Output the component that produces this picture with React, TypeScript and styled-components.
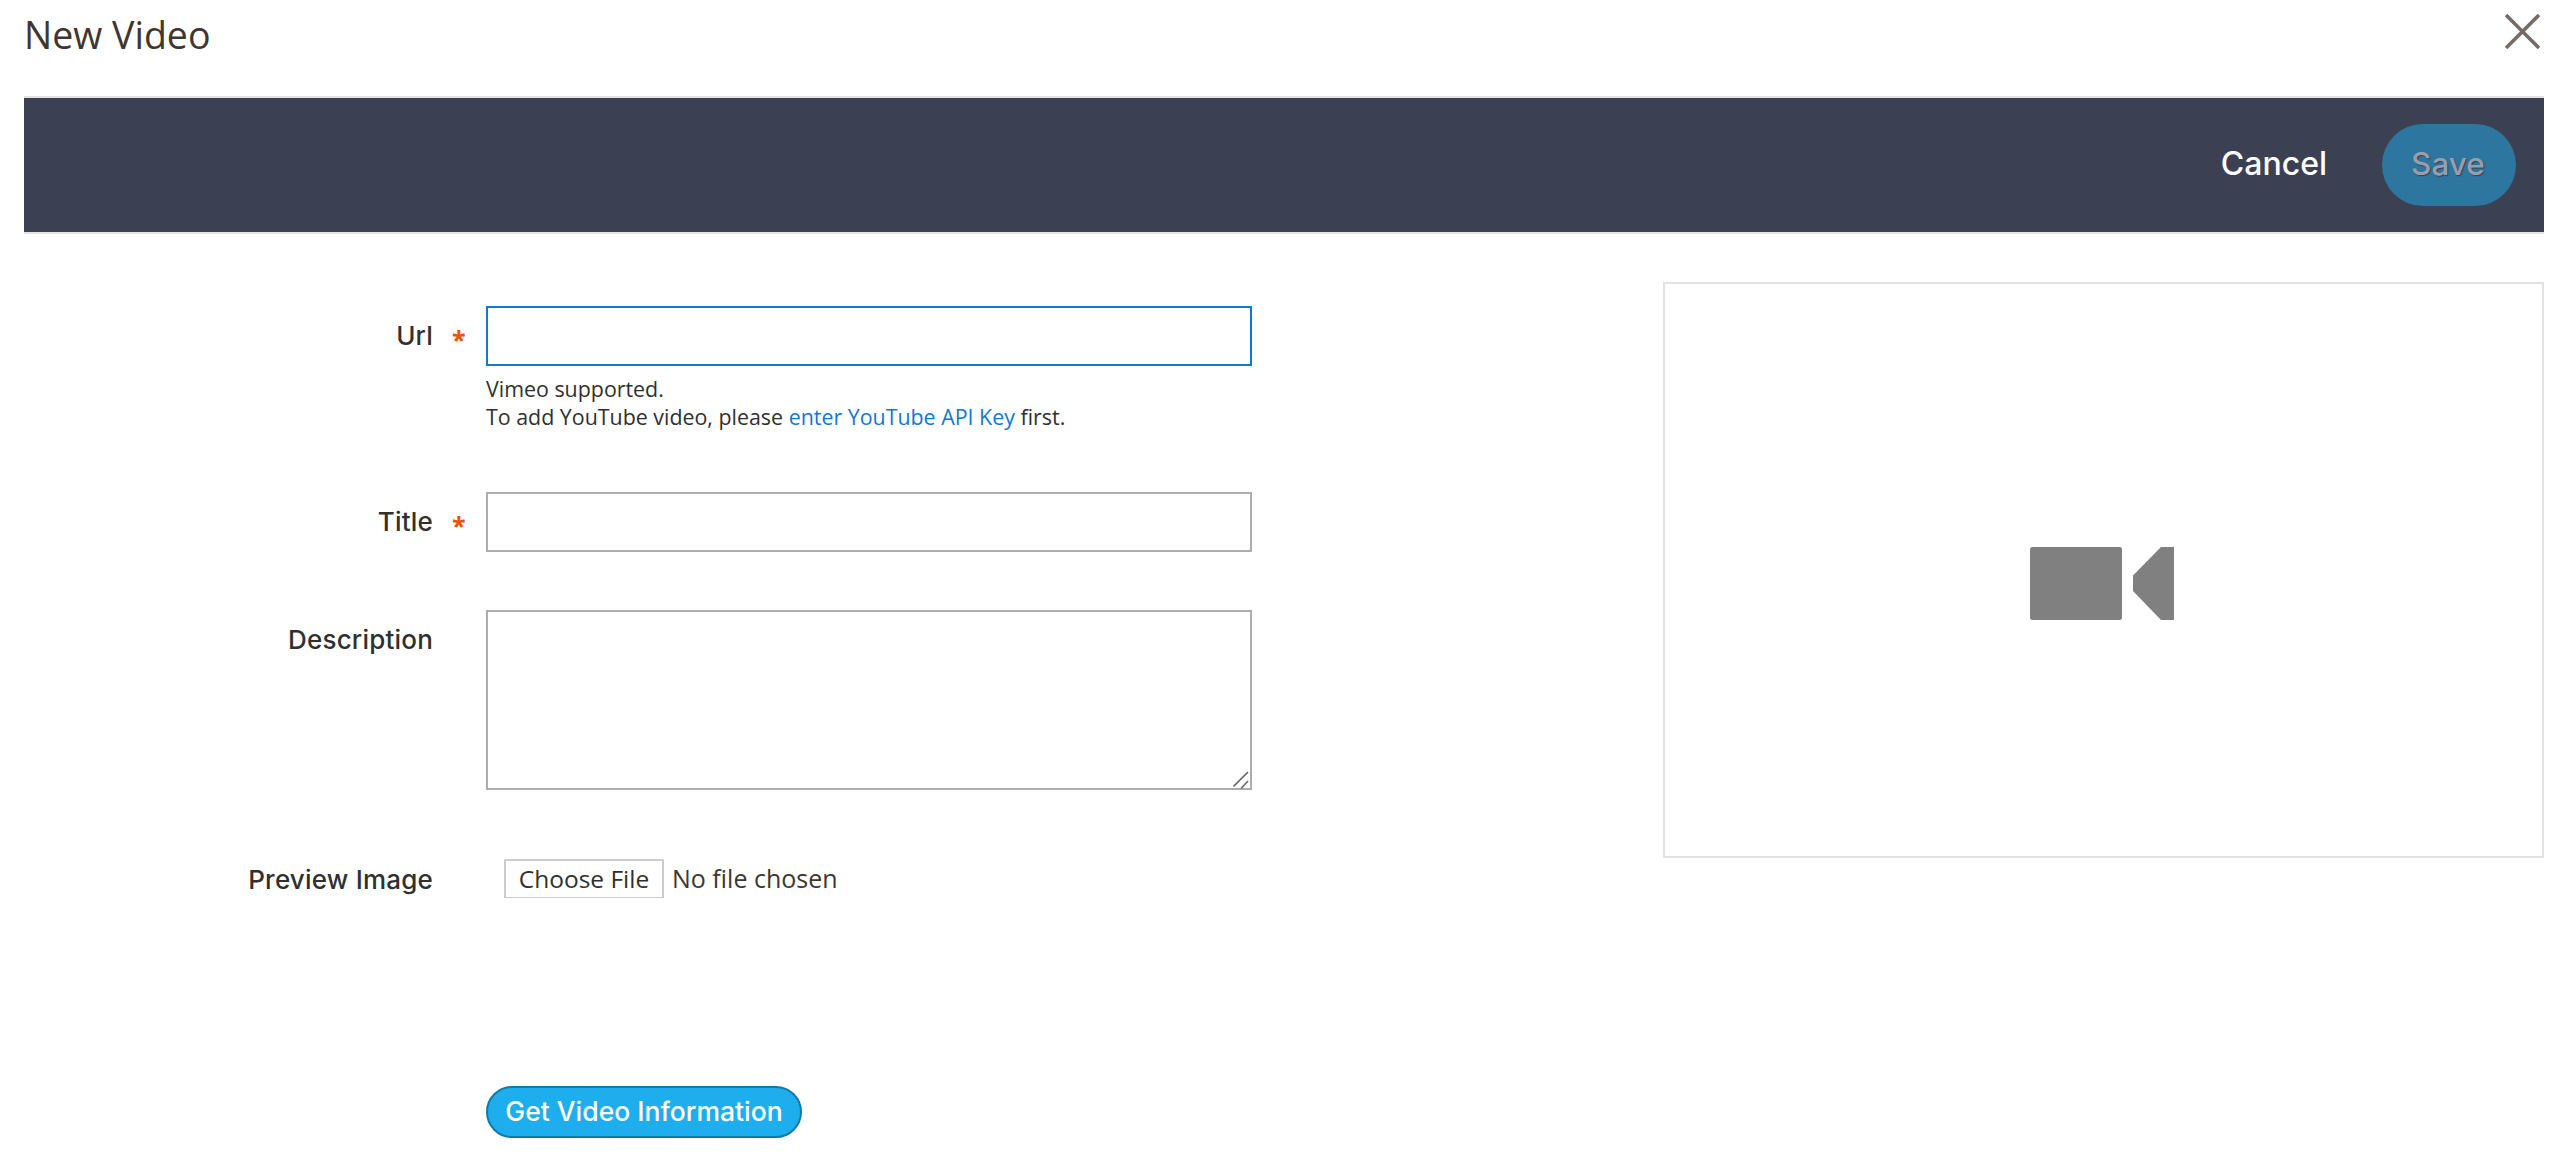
import React from 'react';
import styled, { createGlobalStyle } from 'styled-components';

const GlobalStyle = createGlobalStyle`
  html, body {
    margin: 0;
    padding: 0;
    background: #fff;
  }
  * {
    box-sizing: border-box;
  }
`;

const App = () => {
  return (
    <Page>
      <GlobalStyle />
      <TitleRow>
        <Title>New Video</Title>
        <CloseButton aria-label="Close">
          <svg width="35" height="35" viewBox="0 0 35 35">
            <path d="M1 1 L34 34 M34 1 L1 34" stroke="#736d69" strokeWidth="3.6" fill="none" />
          </svg>
        </CloseButton>
      </TitleRow>

      <Toolbar>
        <CancelButton>Cancel</CancelButton>
        <SaveButton disabled>Save</SaveButton>
      </Toolbar>

      <Content>
        <Form>
          <FieldRow $gap={61}>
            <Label>Url</Label>
            <Star>*</Star>
            <div>
              <TextInput $focused type="text" />
              <Hint>
                Vimeo supported.
                <br />
                To add YouTube video, please <HintLink href="#">enter YouTube API Key</HintLink> first.
              </Hint>
            </div>
          </FieldRow>
          <FieldRow $gap={58}>
            <Label>Title</Label>
            <Star>*</Star>
            <TextInput type="text" />
          </FieldRow>
          <FieldRow $gap={68}>
            <Label>Description</Label>
            <span />
            <TextAreaWrap>
              <TextArea />
              <ResizeGrip width="16" height="18" viewBox="0 0 16 18">
                <path d="M0.5 15.5 L15 1 M8 17.5 L15 10" stroke="#666" strokeWidth="1.6" fill="none" />
              </ResizeGrip>
            </TextAreaWrap>
          </FieldRow>
          <FieldRow $gap={184}>
            <FileLabel>Preview Image</FileLabel>
            <span />
            <FileInput type="file" />
          </FieldRow>
          <FieldRow $gap={0}>
            <span />
            <span />
            <div>
              <InfoButton>Get Video Information</InfoButton>
            </div>
          </FieldRow>
        </Form>

        <Preview>
          <svg width="144" height="73" viewBox="0 0 144 73">
            <rect x="0" y="0" width="92" height="73" rx="2.5" fill="#808080" />
            <path d="M144 0 L131 0 L103 28.5 L103 44 L131 73 L144 73 Z" fill="#808080" />
          </svg>
        </Preview>
      </Content>
    </Page>
  );
};

export default App;

const Page = styled.div`
  width: 2562px;
  height: 1166px;
  padding: 0 18px 0 24px;
  overflow: hidden;
`;

// header
const TitleRow = styled.div`
  height: 96px;
  display: flex;
  justify-content: space-between;
  align-items: flex-start;
`;

const Title = styled.h1`
  margin: 11px 0 0;
  font: normal normal 400 37.5px/48px 'Open Sans', sans-serif;
  color: #41362f;
`;

const CloseButton = styled.button`
  margin: 14px 4px 0 0;
  padding: 0;
  width: 35px;
  height: 35px;
  border: none;
  background: none;
  display: block;

  svg {
    display: block;
  }
`;

const Toolbar = styled.div`
  height: 138px;
  padding-right: 28px;
  display: flex;
  justify-content: flex-end;
  align-items: center;
  gap: 55px;
  background: #3b4153;
  border-top: 2px solid #e3e3e3;
  border-bottom: 2px solid #e3e3e3;
`;

const CancelButton = styled.button`
  padding: 0 0 2px;
  border: none;
  background: none;
  color: #fff;
  font: normal normal 500 32px/40px Inter, sans-serif;
`;

const SaveButton = styled.button`
  width: 134px;
  height: 82px;
  padding: 0 2px 2px 0;
  border: none;
  border-radius: 41px;
  background: #2c769f;
  color: #9a9eac;
  font: normal normal 500 31.5px/40px Inter, sans-serif;
  text-shadow: 1px 1px 1px #3b4054;
`;

// content
const Content = styled.div`
  margin-top: 48px;
  display: flex;
  justify-content: space-between;
  align-items: flex-start;
`;

const Form = styled.div`
  width: 1228px;
  padding-top: 24px;
`;

const FieldRow = styled.div<{ $gap: number }>`
  display: grid;
  grid-template-columns: 409px 53px 766px;
  align-items: start;
  margin-bottom: ${(props) => props.$gap}px;
`;

const Label = styled.label`
  text-align: right;
  color: #303030;
  letter-spacing: 0.2px;
  font: normal normal 500 26px/60px Inter, sans-serif;
`;

const FileLabel = styled(Label)`
  line-height: 44px;
`;

const Star = styled.span`
  height: 60px;
  padding-left: 19px;
  color: #eb5202;
  font: normal normal 700 25px/66px 'Open Sans', sans-serif;
`;

const TextInput = styled.input<{ $focused?: boolean }>`
  display: block;
  width: 766px;
  height: 60px;
  border: 2px solid ${(props) => (props.$focused ? '#1178d4' : '#adadad')};
  border-radius: 0;
  background: #fff;
  outline: none;
`;

const Hint = styled.div`
  margin-top: 9px;
  color: #303030;
  font: normal normal 400 21.4px/28px 'Open Sans', sans-serif;
`;

const HintLink = styled.a`
  color: #1178d4;
  text-decoration: none;
`;

const TextAreaWrap = styled.div`
  position: relative;
  width: 766px;
  height: 180px;
`;

const TextArea = styled.textarea`
  display: block;
  width: 100%;
  height: 100%;
  border: 2px solid #adadad;
  border-radius: 0;
  outline: none;
  resize: none;
`;

// drag handle over the textarea corner
const ResizeGrip = styled.svg`
  position: absolute;
  right: 3px;
  bottom: 1px;
  pointer-events: none;
`;

const FileInput = styled.input`
  display: block;
  width: 600px;
  height: 40px;
  margin-left: 18px;
  color: #41362f;
  font: normal normal 400 25px/40px 'Open Sans', sans-serif;

  &::file-selector-button {
    width: 160px;
    height: 40px;
    margin: 0 8px 0 0;
    padding: 0;
    border: 2px solid #ccc;
    border-radius: 0;
    background: #fff;
    color: #303030;
    font: normal normal 400 24.5px/36px 'Open Sans', sans-serif;
  }
`;

const InfoButton = styled.button`
  width: 316px;
  height: 52px;
  padding: 0 0 2px;
  border: 2px solid #0f7ba9;
  border-radius: 26px;
  background: #1eaeee;
  color: #fff;
  font: normal normal 500 26.5px/44px Inter, sans-serif;
`;

const Preview = styled.div`
  width: 881px;
  height: 576px;
  padding: 26px 3px 0 0;
  border: 2px solid #e3e3e3;
  display: flex;
  justify-content: center;
  align-items: center;
`;
